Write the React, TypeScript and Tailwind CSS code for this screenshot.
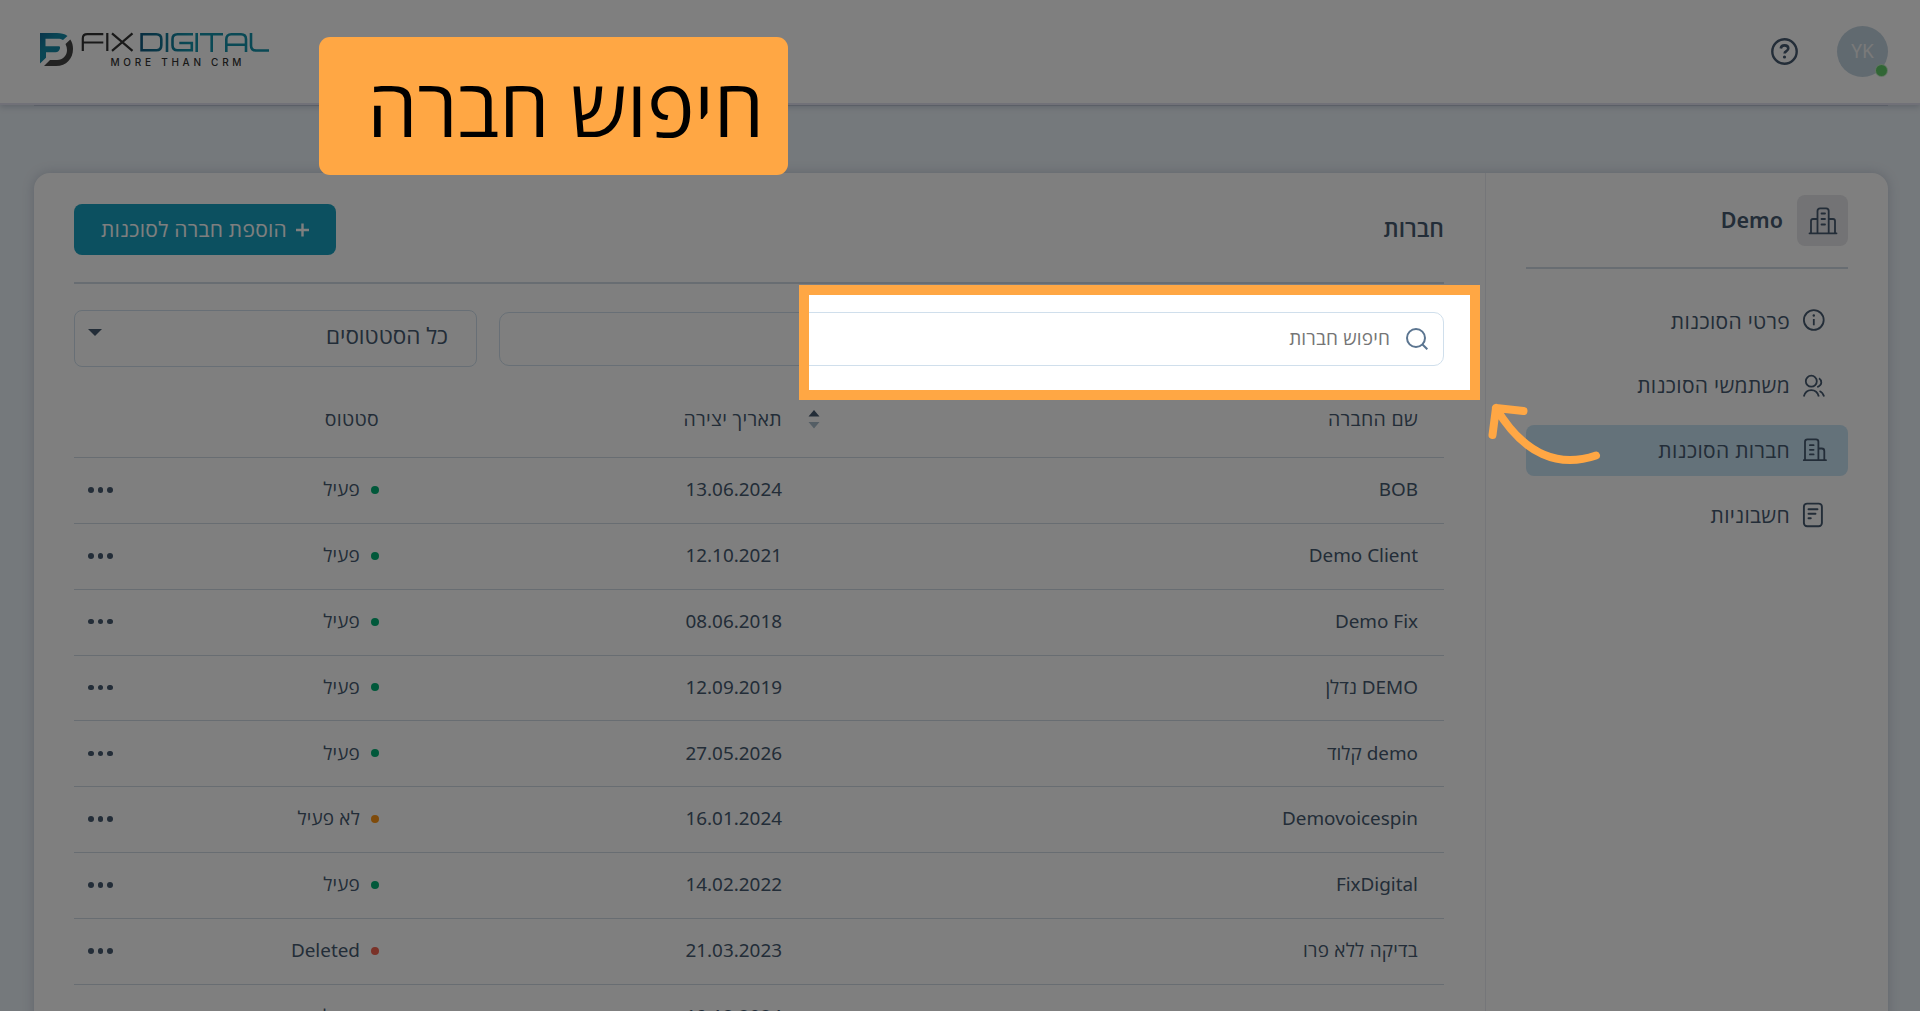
import React from "react";

const INK = "#465a70";

type Status = { label: string; dot: string };
const ACTIVE: Status = { label: "פעיל", dot: "bg-[#00b074]" };
const INACTIVE: Status = { label: "לא פעיל", dot: "bg-[#ff9616]" };
const DELETED: Status = { label: "Deleted", dot: "bg-[#f56450]" };

const rows: { name: string; date: string; status: Status }[] = [
  { name: "BOB", date: "13.06.2024", status: ACTIVE },
  { name: "Demo Client", date: "12.10.2021", status: ACTIVE },
  { name: "Demo Fix", date: "08.06.2018", status: ACTIVE },
  { name: "DEMO נדלן", date: "12.09.2019", status: ACTIVE },
  { name: "demo קלוד", date: "27.05.2026", status: ACTIVE },
  { name: "Demovoicespin", date: "16.01.2024", status: INACTIVE },
  { name: "FixDigital", date: "14.02.2022", status: ACTIVE },
  { name: "בדיקה ללא פרו", date: "21.03.2023", status: DELETED },
  { name: "", date: "19.12.2024", status: ACTIVE },
];

const isHebrew = (s: string) => /^[\u0590-\u05ff\s]+$/.test(s);

function Logo() {
  return (
    <svg width="232" height="36" viewBox="0 0 232 36" fill="none">
      <defs>
        <linearGradient id="mark" x1="0" x2="1" y1="0" y2="1">
          <stop offset="0" stopColor="#146a96" />
          <stop offset=".35" stopColor="#148ba8" />
          <stop offset="1" stopColor="#1685a5" />
        </linearGradient>
        <linearGradient id="word" gradientUnits="userSpaceOnUse" x1="101" x2="150" y1="0" y2="0">
          <stop offset="0" stopColor="#105a80" />
          <stop offset="1" stopColor="#1492aa" />
        </linearGradient>
      </defs>
      <path d="M1 1h17c4 0 7.500 .8 10.500 3l-4.500 4c-1.500-1-3-1.300-5-1.300H6.500v7.600H20q1.500 0 1 2c-.7 2.500-2 4-4.500 4H7v5.500L1 31.500z" fill="url(#mark)" />
      <path d="M31.300 7.500c2 3 2.700 6 2.700 9.500 0 9.500-6.500 17-17 17H5l6-6h7c6 0 10-4.500 10-10 0-2-.5-4-1.500-6z" fill="#444" />
      <g stroke="#333" strokeWidth="2.200">
        <path d="M43.800 19V6.500Q43.800 2.200 48.300 2.200H64.300M44 10.500H64.300M68.300 1v18M73 1.300 93.500 18.800M93.500 1.300 73 18.800" />
      </g>
      <g stroke="url(#word)" strokeWidth="2.600">
        <path d="M102.600 2.300h14.700q5 0 5 5v6q0 5-5 5h-14.700zM128 1v19M154 2.300h-15.500q-5 0-5 5v6q0 5 5 5h14.300v-7.300h-12.500M157.700 1v19M161 2.300h23M172.700 2v18M187.300 20V7.300q0-5 5-5h9.700q5 0 5 5V20M187.500 12.800h19M212 1v12.500q0 5 5 5H230" />
      </g>
      <text x="71.500" y="34" fill="#333" direction="ltr" fontFamily="Inter, sans-serif" fontSize="10" fontWeight="500" textLength="131" lengthAdjust="spacing">
        MORE THAN CRM
      </text>
    </svg>
  );
}

function OfficeIcon() {
  return (
    <svg width="30" height="28" viewBox="0 0 30 28" fill="none" stroke={INK} strokeWidth="1.800" strokeLinecap="round" strokeLinejoin="round">
      <path d="M1.500 26.300h27M9.500 26V4q0-2.600 2.600-2.600h6q2.600 0 2.600 2.600v22M9.500 12H5q-2 0-2 2v12M20.700 12H25q2 0 2 2v12M13.500 6.500h3.500M13.500 12h3.500M13.500 17.500h3.500" />
    </svg>
  );
}

function InfoIcon() {
  return (
    <svg width="24" height="24" viewBox="0 0 24 24" fill="none" stroke={INK} strokeWidth="1.800">
      <circle cx="11.800" cy="11" r="9.900" />
      <path d="M11.800 10v6.300" />
      <circle cx="11.800" cy="6.500" r="1.200" fill={INK} stroke="none" />
    </svg>
  );
}

function UsersIcon() {
  return (
    <svg width="24" height="24" viewBox="0 0 24 24" fill="none" stroke={INK} strokeWidth="1.800" strokeLinejoin="round">
      <circle cx="9.300" cy="7.200" r="5.500" />
      <path d="M1.800 22.500q1.600-6.300 7.500-6.300t7.500 6.300M17 4.200q2.300 1.500 2.300 4.400t-4 4.500M17.500 17q3.200 1.200 4.600 5.500" />
    </svg>
  );
}

function CompanyIcon() {
  return (
    <svg width="26" height="24" viewBox="0 0 26 24" fill="none" stroke={INK} strokeWidth="1.800" strokeLinecap="round" strokeLinejoin="round">
      <path d="M1.800 22.200H24M3 22V3.800Q3 1.400 5.400 1.400H14q2.400 0 2.400 2.400V22M16.500 10.500h3.300q2.500 0 2.500 2.500v9M7.900 7.200h3.700M7.900 11.800h3.700M7.900 16.400h3.700" />
    </svg>
  );
}

function InvoiceIcon() {
  return (
    <svg width="24" height="26" viewBox="0 0 24 26" fill="none" stroke={INK} strokeWidth="1.900" strokeLinecap="round">
      <rect x="1.900" y="1.600" width="18" height="22.600" rx="3.200" />
      <path d="M6.500 7.200h9M6.500 11.700h7M6.500 16.200h2.300" />
    </svg>
  );
}

function SidebarItem({ label, icon, active = false }: { label: string; icon: React.ReactNode; active?: boolean }) {
  return (
    <li className={`flex h-[51px] items-center rounded-lg pr-[19px] ${active ? "bg-[#c8e4f5]" : ""}`}>
      <span className="flex w-[27px] justify-end">{icon}</span>
      <span className="mr-[12px] text-[21px] leading-none tracking-[0.3px]">{label}</span>
    </li>
  );
}

function Cell({ children, className = "" }: { children?: React.ReactNode; className?: string }) {
  return <div className={`flex shrink-0 items-center ${className}`}>{children}</div>;
}

export default function App() {
  return (
    <div dir="rtl" className="relative h-[1011px] w-[1920px] overflow-hidden bg-[#ebf2f8] font-['Noto_Sans','Open_Sans',sans-serif] text-[#465a70]">
      <header className="relative flex h-[105px] items-center border-b-2 border-[#e2e3f0] bg-white pr-[32px] pl-[39px] shadow-[0_2px_6px_rgba(100,110,140,0.3)]">
        <div className="relative flex size-[51px] items-center justify-center rounded-full bg-[#c3d4e0] text-[19px] text-[#f4f4f4]">
          YK
          <span className="absolute right-0 bottom-0 size-[13px] rounded-full border border-white/60 bg-[#63cd6b]" />
        </div>
        <svg className="mr-[39px]" width="27" height="27" viewBox="0 0 27 27" fill="none" stroke={INK} strokeWidth="2.400">
          <circle cx="13.500" cy="13.500" r="12.200" />
          <path d="M9.800 10.500q.3-3.100 3.800-3.100t3.700 2.900q0 1.700-1.900 2.800-1.800 1-1.800 2.500" strokeWidth="2.600" />
          <circle cx="13.500" cy="19" r="1.600" fill={INK} stroke="none" />
        </svg>
        <div className="mt-[32px] mr-auto self-start">
          <Logo />
        </div>
      </header>
      <div className="mr-[32px] ml-[34px] h-px bg-[#ccd5e0]" />

      <div className="mt-[67px] mr-[32px] ml-[34px] flex h-[900px] rounded-2xl bg-white shadow-[0_0_12px_rgba(100,110,140,0.3)]">
        <aside className="w-[403px] border-l border-[#ebedf2] pt-[22px] pr-[40px] pl-[40px]">
          <div className="flex h-[74px] items-start border-b-2 border-[#d0dae5]">
            <div className="flex size-[51px] items-center justify-center rounded-lg bg-[#e6e6ea]">
              <OfficeIcon />
            </div>
            <div className="mr-[14px] text-[21.500px] leading-[49px] font-semibold">Demo</div>
          </div>
          <ul className="mt-[26.600px] flex flex-col gap-[13.700px]">
            <SidebarItem label="פרטי הסוכנות" icon={<InfoIcon />} />
            <SidebarItem label="משתמשי הסוכנות" icon={<UsersIcon />} />
            <SidebarItem label="חברות הסוכנות" icon={<CompanyIcon />} active />
            <SidebarItem label="חשבוניות" icon={<InvoiceIcon />} />
          </ul>
        </aside>

        <main className="flex-1 pt-[31px] pr-[41px] pl-[40px]">
          <div className="flex h-[80px] items-start justify-between border-b-2 border-[#d0dae5]">
            <h1 className="text-[22.800px] leading-[50px] font-semibold">חברות</h1>
            <button className="flex h-[51px] w-[262px] items-center rounded-lg bg-[#18a1c0] pr-[27px] text-[21px] tracking-[0.250px] text-white">
              <svg width="13" height="14" viewBox="0 0 13 14" stroke="white" strokeWidth="2.400">
                <path d="M0 7h13M6.500 .5v13" />
              </svg>
              <span className="mr-[9px]">הוספת חברה לסוכנות</span>
            </button>
          </div>

          <div className="mt-[26px] flex h-[57px] items-center justify-between">
            <div className="flex h-[54px] w-[945px] items-center rounded-[10px] border border-[#d0dfec] pr-[15px]">
              <svg width="22" height="22" viewBox="0 0 22 22" fill="none" stroke="#5b7590" strokeWidth="2">
                <circle cx="10" cy="10" r="9" />
                <path d="m16.500 16.500 4.800 4.800" />
              </svg>
              <span className="mr-[16px] text-[19px] tracking-[0.150px] text-[#757575]">חיפוש חברות</span>
            </div>
            <div className="flex h-[57px] w-[403px] items-start justify-between rounded-lg border border-[#d0dfec] pr-[28px] pl-[13px]">
              <span className="text-[22.500px] leading-[50px]">כל הסטטוסים</span>
              <svg className="mt-[18px]" width="14" height="8" viewBox="0 0 14 8" fill={INK}>
                <path d="M0 0h14L7 7z" />
              </svg>
            </div>
          </div>

          <div className="mt-[22px] flex h-[69px] border-b border-[#d0dae5] pt-1 text-[19.500px] font-medium tracking-[0.300px]">
            <Cell className="h-[52px] w-[602px] pr-[26px]">שם החברה</Cell>
            <Cell className="h-[52px] w-[436px] pr-[22px]">
              <svg width="12" height="20" viewBox="0 0 12 20" className="ml-[26px]">
                <path d="M6 1l5.500 6.500H.5z" fill={INK} />
                <path d="M6 19.500L.5 13h11z" fill="#a8bccb" />
              </svg>
              תאריך יצירה
            </Cell>
            <Cell className="h-[52px] w-[250px] pr-[27px]">סטטוס</Cell>
          </div>
          {rows.map((r) => (
            <div key={r.date} className="flex h-[65.850px] items-stretch border-b border-[#d0dae5] pb-[2px] text-[18.900px]">
              <Cell className={`w-[602px] pr-[26px] ${isHebrew(r.name) ? "tracking-[0.250px]" : ""}`}>{r.name}</Cell>
              <Cell className="w-[436px] pr-[60px]">{r.date}</Cell>
              <Cell className={`w-[250px] pr-[27px] ${isHebrew(r.status.label) ? "tracking-[0.200px]" : ""}`}>
                <span className={`mt-px ml-[11px] size-[8px] rounded-full ${r.status.dot}`} />
                {r.status.label}
              </Cell>
              <Cell className="mt-px mr-auto gap-[4px] pl-[14px]">
                <span className="size-[5.500px] rounded-full bg-[#465a70]" />
                <span className="size-[5.500px] rounded-full bg-[#465a70]" />
                <span className="size-[5.500px] rounded-full bg-[#465a70]" />
              </Cell>
            </div>
          ))}
        </main>
      </div>

      {/* Spotlight that dims everything outside its frame */}
      <div className="absolute top-[295px] left-[809px] h-[95px] w-[661px] shadow-[0_0_0_10px_#ffa744,0_0_0_3000px_rgba(0,0,0,0.5)]" />
      <div className="absolute top-[37px] left-[319px] flex h-[138px] w-[469px] items-center rounded-[11px] bg-[#ffa744] pr-[24px] font-['Open_Sans',sans-serif] text-[80px] leading-none whitespace-nowrap text-black">
        חיפוש חברה
      </div>
      <svg className="absolute top-[400px] left-[1484px]" width="120" height="70" viewBox="0 0 120 70" fill="none" stroke="#ffa744" strokeWidth="8" strokeLinecap="round" strokeLinejoin="round">
        <path d="M112 55.500C75 68 40 55 12 8M8.500 35 12 8l27.500 3" />
      </svg>
    </div>
  );
}
